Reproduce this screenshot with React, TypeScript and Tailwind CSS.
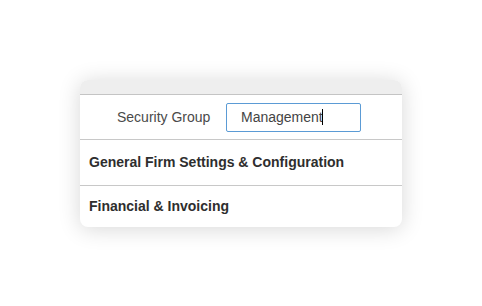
export default function App() {
  return (
    <div className="min-h-screen bg-white pt-[80px] pl-[80px] font-['Liberation_Sans',Arial,sans-serif]">
      <div className="w-[322px] overflow-hidden rounded-[8px] bg-white shadow-[0_2px_22px_rgba(0,0,0,0.16)]">
        <div className="h-[15px] border-b border-[#c4c4c4] bg-[#eeeeee]" />
        <div className="flex h-[45px] items-center border-b border-[#c8c8c8]">
          <span className="ml-[37px] w-[109px] text-[14px] text-[#4a4a4a]">Security Group</span>
          <div className="flex h-[29px] w-[135px] items-center rounded-[2px] border border-[#5b9bd5] pl-[14px]">
            <span className="text-[14px] text-[#444]">Management</span>
            <span className="ml-[-1px] h-[16px] w-px bg-black" />
          </div>
        </div>
        <div className="flex h-[46px] items-center border-b border-[#c8c8c8] px-[9px]">
          <span className="text-[14px] font-bold text-[#2e2e2e]">General Firm Settings &amp; Configuration</span>
        </div>
        <div className="flex h-[41px] items-center px-[9px]">
          <span className="text-[14px] font-bold text-[#2e2e2e]">Financial &amp; Invoicing</span>
        </div>
      </div>
    </div>
  );
}
